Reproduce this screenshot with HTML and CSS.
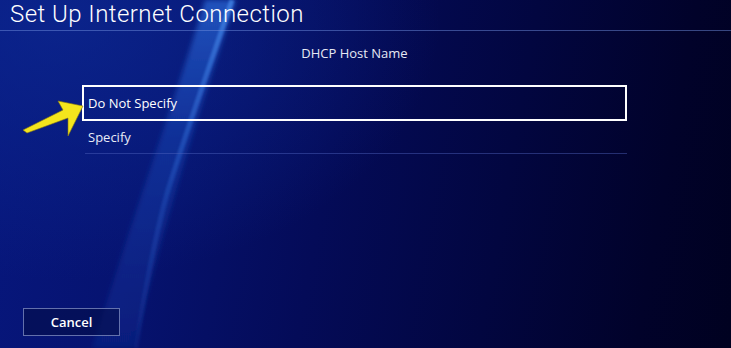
FILE: index.html
```html
<!DOCTYPE html>
<html lang="en">
<head>
<meta charset="utf-8">
<title>Set Up Internet Connection</title>
<link rel="stylesheet" href="styles.css">
</head>
<body>
<div class="screen">
  <svg class="swoosh" width="731" height="348" viewBox="0 0 731 348" aria-hidden="true">
    <defs>
      <linearGradient id="sw" x1="0" y1="0" x2="0" y2="1">
        <stop offset="0" stop-color="#2a6ad8" stop-opacity="0.7"/>
        <stop offset="0.4" stop-color="#1c50c4" stop-opacity="0.4"/>
        <stop offset="1" stop-color="#1840b0" stop-opacity="0.22"/>
      </linearGradient>
      <linearGradient id="edge" x1="0" y1="0" x2="0" y2="1">
        <stop offset="0" stop-color="#4a90f0" stop-opacity="0.65"/>
        <stop offset="0.6" stop-color="#3070e0" stop-opacity="0.25"/>
        <stop offset="1" stop-color="#3070e0" stop-opacity="0.1"/>
      </linearGradient>
      <filter id="blur" x="-20%" y="-20%" width="140%" height="140%">
        <feGaussianBlur stdDeviation="2.5"/>
      </filter>
      <filter id="blur2" x="-20%" y="-20%" width="140%" height="140%">
        <feGaussianBlur stdDeviation="1.2"/>
      </filter>
    </defs>
    <path d="M205 0 C185 70 145 180 92 348 L134 348 C160 240 195 120 236 0 Z" fill="url(#sw)" filter="url(#blur)"/>
    <path d="M232 0 C212 60 190 120 168 190 C155 235 145 290 136 348" fill="none" stroke="url(#edge)" stroke-width="5" filter="url(#blur2)"/>
  </svg>

  <header class="topbar">
    <h1 class="title">Set Up Internet Connection</h1>
  </header>

  <main class="content">
    <div class="panel">
      <div class="subtitle">DHCP Host Name</div>
      <ul class="options">
        <li class="option selected">Do Not Specify</li>
        <li class="option">Specify</li>
      </ul>
    </div>
  </main>

  <footer class="footer">
    <button class="cancel">Cancel</button>
  </footer>

  <svg class="arrow" width="70" height="45" viewBox="0 0 70 45" aria-hidden="true">
    <polygon points="62,13 37,8 42,17 2,37 6,40 47,25 47,43" fill="#f4e51d" stroke="#8a7a10" stroke-width="0.6" stroke-linejoin="round"/>
  </svg>
</div>
</body>
</html>
```

FILE: styles.css
```css
html, body {
  margin: 0;
  padding: 0;
  background: #020530;
}

.screen {
  position: relative;
  width: 731px;
  height: 348px;
  overflow: hidden;
  display: flex;
  flex-direction: column;
  font-family: "Open Sans", "Noto Sans", "DejaVu Sans", sans-serif;
  color: #f2f4fa;
  background:
    radial-gradient(ellipse 380px 260px at 60px 20px, rgba(12, 40, 145, 0.75), rgba(12, 40, 145, 0) 100%),
    linear-gradient(100deg, #07177e 0%, #061370 22%, #040b58 45%, #020640 68%, #01022a 88%, #000120 100%);
}

.swoosh {
  position: absolute;
  left: 0;
  top: 0;
  z-index: 0;
}

.topbar,
.content,
.footer {
  position: relative;
  z-index: 1;
}

.topbar {
  height: 31px;
  box-sizing: border-box;
  border-bottom: 1px solid rgba(110, 140, 220, 0.5);
  padding-left: 10px;
}

.title {
  margin: 0;
  font-family: Roboto, "Open Sans", sans-serif;
  font-size: 24px;
  font-weight: 300;
  line-height: 29px;
  letter-spacing: 0.45px;
  color: #ffffff;
  white-space: nowrap;
}

.content {
  display: flex;
  padding-left: 82px;
}

.panel {
  width: 545px;
  display: flex;
  flex-direction: column;
}

.subtitle {
  text-align: center;
  font-size: 13px;
  line-height: 18px;
  margin-top: 13px;
  margin-bottom: 23px;
  color: #e6e9f4;
}

.options {
  list-style: none;
  margin: 0;
  padding: 0;
}

.option {
  font-size: 13px;
  line-height: 18px;
  box-sizing: border-box;
  display: flex;
  align-items: center;
}

.option.selected {
  height: 36px;
  border: 2px solid #ffffff;
  padding-left: 4px;
  color: #ffffff;
}

.option:not(.selected) {
  height: 33px;
  margin-left: 3px;
  padding-left: 3px;
  padding-bottom: 1px;
  border-bottom: 1px solid rgba(80, 100, 190, 0.45);
  color: #e8ebf6;
}

.footer {
  margin-top: auto;
  padding: 0 0 12px 23px;
}

.cancel {
  width: 97px;
  height: 28px;
  box-sizing: border-box;
  border: 1px solid rgba(150, 165, 215, 0.65);
  background: rgba(3, 12, 70, 0.55);
  color: #ffffff;
  font-family: "Open Sans", "Noto Sans", "DejaVu Sans", sans-serif;
  font-size: 13px;
  font-weight: 600;
  padding: 0;
}

.arrow {
  position: absolute;
  left: 21px;
  top: 93px;
  z-index: 2;
}
```
